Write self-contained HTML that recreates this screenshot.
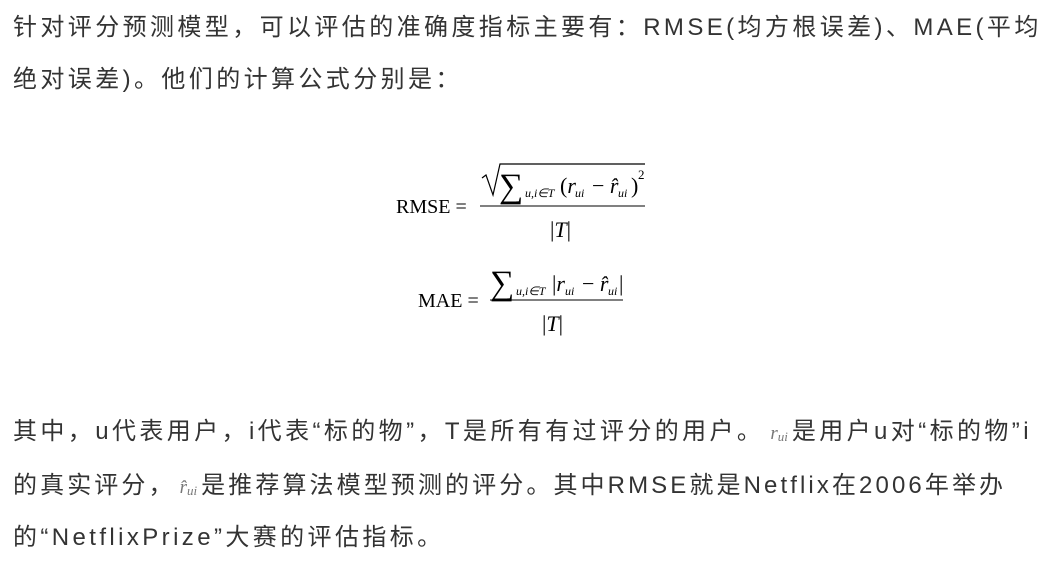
<!DOCTYPE html>
<html><head><meta charset="utf-8"><style>
html,body{margin:0;padding:0;background:#fff;}
body{width:1050px;height:566px;position:relative;overflow:hidden;}
.l{position:absolute;left:13px;white-space:nowrap;font-family:"Liberation Sans","Noto Sans CJK SC",sans-serif;font-size:24px;letter-spacing:3.4px;color:#333;line-height:30px;}
.m{font-family:"Liberation Serif",serif;font-style:italic;font-size:19px;color:#777;letter-spacing:0;margin:0 4px 0 6px;}
.m sub{font-size:13px;vertical-align:-2px;}
svg text{font-family:"Liberation Serif",serif;fill:#000;}
</style></head><body>
<div class="l" style="top:13px">针对评分预测模型，可以评估的准确度指标主要有：RMSE(均方根误差)、MAE(平均</div>
<div class="l" style="top:65px">绝对误差)。他们的计算公式分别是：</div>
<svg style="position:absolute;left:380px;top:150px" width="300" height="190">
 <text x="16" y="63" font-size="20">RMSE =</text>
 <line x1="100" y1="56" x2="265" y2="56" stroke="#000" stroke-width="1"/>
 <path d="M102 28 L106 25 L113 45 L120 14 L265 14" fill="none" stroke="#000" stroke-width="1.2"/>
 <text x="119" y="47" font-size="34">∑</text>
 <text x="145" y="47" font-size="12" font-style="italic">u,i∈T</text>
 <text x="180" y="43" font-size="22">(<tspan font-style="italic">r</tspan></text>
 <text x="195" y="47" font-size="12" font-style="italic">ui</text>
 <text x="212" y="43" font-size="22">− <tspan font-style="italic">r̂</tspan></text>
 <text x="238" y="47" font-size="12" font-style="italic">ui</text>
 <text x="251" y="43" font-size="22">)</text>
 <text x="258" y="29" font-size="13">2</text>
 <text x="170" y="87" font-size="22">|<tspan font-style="italic">T</tspan>|</text>
 <text x="38" y="157" font-size="20">MAE =</text>
 <line x1="110" y1="150" x2="243" y2="150" stroke="#000" stroke-width="1"/>
 <text x="110" y="144" font-size="34">∑</text>
 <text x="136" y="145" font-size="12" font-style="italic">u,i∈T</text>
 <text x="172" y="141" font-size="22">|<tspan font-style="italic">r</tspan></text>
 <text x="185" y="145" font-size="12" font-style="italic">ui</text>
 <text x="202" y="141" font-size="22">− <tspan font-style="italic">r̂</tspan></text>
 <text x="228" y="145" font-size="12" font-style="italic">ui</text>
 <text x="239" y="141" font-size="22">|</text>
 <text x="162" y="181" font-size="22">|<tspan font-style="italic">T</tspan>|</text>
</svg>
<div class="l" style="top:417px">其中，u代表用户，i代表“标的物”，T是所有有过评分的用户。<span class="m">r<sub>ui</sub></span>是用户u对“标的物”i</div>
<div class="l" style="top:471px;letter-spacing:3.1px">的真实评分，<span class="m" style="margin-left:4px">r̂<sub>ui</sub></span>是推荐算法模型预测的评分。其中RMSE就是Netflix在2006年举办</div>
<div class="l" style="top:523px">的“NetflixPrize”大赛的评估指标。</div>
</body></html>
